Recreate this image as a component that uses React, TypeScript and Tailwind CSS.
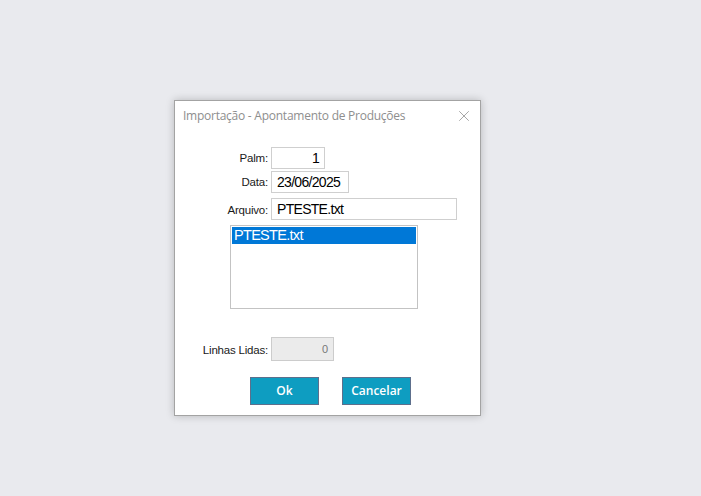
import { X } from 'lucide-react';

const label = 'w-[96px] shrink-0 pr-[3px] text-right text-[11.5px] tracking-[-0.2px] text-[#1a1a1a] font-["Liberation_Sans",Arial,sans-serif]';
const field =
  'h-[22px] border border-[#cfcfcf] bg-white px-[5px] text-[14px] tracking-[-0.7px] text-black font-["Liberation_Sans",Arial,sans-serif] flex items-center';

export default function App() {
  return (
    <div className="min-h-[496px] w-full bg-[#e9eaee] pl-[174px] pt-[100px]">
      <div className="w-[307px] h-[316px] border border-[#a3a3a3] bg-white shadow-[0_0_8px_rgba(0,0,0,0.22)] flex flex-col">
        {/* titulo */}
        <div className="flex h-[30px] items-center justify-between pl-[8px] pr-[7px]">
          <span className='text-[12px] text-[#8e8e8e] font-["Open_Sans",sans-serif] tracking-[-0.25px]'>
            Importação - Apontamento de Produções
          </span>
          <X className="h-[18px] w-[18px] text-[#8a8a8a]" strokeWidth={1} />
        </div>

        <div className="mt-[16px] flex items-end">
          <span className={label + ' pb-[2px]'}>Palm:</span>
          <div className={field + ' w-[54px] justify-end'}>1</div>
        </div>

        <div className="mt-[2px] flex items-end">
          <span className={label + ' pb-[2px]'}>Data:</span>
          <div className={field + ' w-[78px]'}>23/06/2025</div>
        </div>

        <div className="mt-[5px] flex items-end">
          <span className={label + ' pb-[1px]'}>Arquivo:</span>
          <div className={field + ' w-[186px] text-[12.5px] tracking-[-0.5px]'}>PTESTE.txt</div>
        </div>

        <div className="ml-[55px] mt-[5px] h-[84px] w-[188px] border border-[#c3c3c3] bg-white p-[1px]">
          <div className='h-[17px] bg-[#0078d7] pl-[2px] text-[14.5px] leading-[17px] tracking-[-0.7px] text-white font-["Liberation_Sans",Arial,sans-serif]'>
            PTESTE.txt
          </div>
        </div>

        <div className="mt-[28px] flex items-end">
          <span className={label + ' pb-[2px]'}>Linhas Lidas:</span>
          <div className='h-[24px] w-[63px] border border-[#cccccc] bg-[#ebebeb] pr-[5px] pt-[3px] text-right text-[11px] text-[#777] font-["Liberation_Sans",Arial,sans-serif]'>
            0
          </div>
        </div>

        <div className="mt-[16px] flex gap-[23px] pl-[75px]">
          <button className='h-[28px] w-[69px] border border-[#5d6f8c] bg-[#0e9dc1] text-[12px] font-semibold text-white font-["Open_Sans",sans-serif]'>
            Ok
          </button>
          <button className='h-[28px] w-[69px] border border-[#5d6f8c] bg-[#0e9dc1] text-[12px] font-semibold text-white font-["Open_Sans",sans-serif]'>
            Cancelar
          </button>
        </div>
      </div>
    </div>
  );
}
